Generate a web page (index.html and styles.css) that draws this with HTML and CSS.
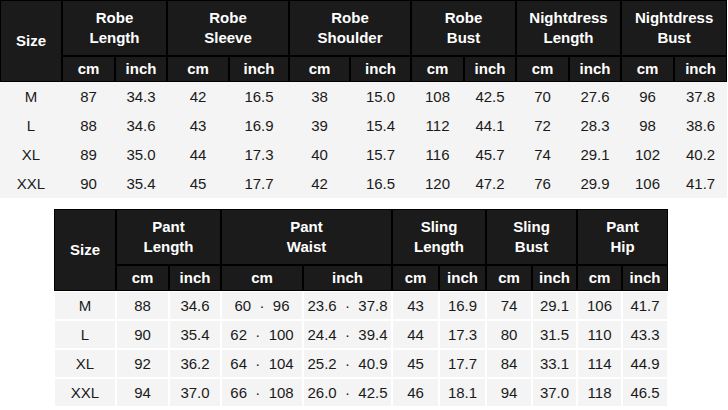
FILE: index.html
```html
<!DOCTYPE html>
<html>
<head>
<meta charset="utf-8">
<link rel="stylesheet" href="styles.css">
</head>
<body>
<div class="page">
<table class="chart chart-top">
  <colgroup>
    <col style="width:62px">
    <col style="width:53px"><col style="width:52px">
    <col style="width:62px"><col style="width:60px">
    <col style="width:61px"><col style="width:61px">
    <col style="width:53px"><col style="width:52px">
    <col style="width:53px"><col style="width:52px">
    <col style="width:53px"><col style="width:53px">
  </colgroup>
  <thead>
    <tr class="h1">
      <th rowspan="2">Size</th>
      <th colspan="2">Robe<br>Length</th>
      <th colspan="2">Robe<br>Sleeve</th>
      <th colspan="2">Robe<br>Shoulder</th>
      <th colspan="2">Robe<br>Bust</th>
      <th colspan="2">Nightdress<br>Length</th>
      <th colspan="2">Nightdress<br>Bust</th>
    </tr>
    <tr class="h2">
      <th>cm</th><th>inch</th><th>cm</th><th>inch</th><th>cm</th><th>inch</th>
      <th>cm</th><th>inch</th><th>cm</th><th>inch</th><th>cm</th><th>inch</th>
    </tr>
  </thead>
  <tbody>
    <tr><td>M</td><td>87</td><td>34.3</td><td>42</td><td>16.5</td><td>38</td><td>15.0</td><td>108</td><td>42.5</td><td>70</td><td>27.6</td><td>96</td><td>37.8</td></tr>
    <tr><td>L</td><td>88</td><td>34.6</td><td>43</td><td>16.9</td><td>39</td><td>15.4</td><td>112</td><td>44.1</td><td>72</td><td>28.3</td><td>98</td><td>38.6</td></tr>
    <tr><td>XL</td><td>89</td><td>35.0</td><td>44</td><td>17.3</td><td>40</td><td>15.7</td><td>116</td><td>45.7</td><td>74</td><td>29.1</td><td>102</td><td>40.2</td></tr>
    <tr><td>XXL</td><td>90</td><td>35.4</td><td>45</td><td>17.7</td><td>42</td><td>16.5</td><td>120</td><td>47.2</td><td>76</td><td>29.9</td><td>106</td><td>41.7</td></tr>
  </tbody>
</table>

<table class="chart chart-bottom">
  <colgroup>
    <col style="width:62px">
    <col style="width:53px"><col style="width:52px">
    <col style="width:82px"><col style="width:89px">
    <col style="width:47px"><col style="width:47px">
    <col style="width:46px"><col style="width:45px">
    <col style="width:45px"><col style="width:46px">
  </colgroup>
  <thead>
    <tr class="h1">
      <th rowspan="2">Size</th>
      <th colspan="2">Pant<br>Length</th>
      <th colspan="2">Pant<br>Waist</th>
      <th colspan="2">Sling<br>Length</th>
      <th colspan="2">Sling<br>Bust</th>
      <th colspan="2">Pant<br>Hip</th>
    </tr>
    <tr class="h2">
      <th>cm</th><th>inch</th><th>cm</th><th>inch</th><th>cm</th><th>inch</th>
      <th>cm</th><th>inch</th><th>cm</th><th>inch</th>
    </tr>
  </thead>
  <tbody>
    <tr><td>M</td><td>88</td><td>34.6</td><td>60&nbsp;&nbsp;·&nbsp;&nbsp;96</td><td>23.6&nbsp;&nbsp;·&nbsp;&nbsp;37.8</td><td>43</td><td>16.9</td><td>74</td><td>29.1</td><td>106</td><td>41.7</td></tr>
    <tr><td>L</td><td>90</td><td>35.4</td><td>62&nbsp;&nbsp;·&nbsp;&nbsp;100</td><td>24.4&nbsp;&nbsp;·&nbsp;&nbsp;39.4</td><td>44</td><td>17.3</td><td>80</td><td>31.5</td><td>110</td><td>43.3</td></tr>
    <tr><td>XL</td><td>92</td><td>36.2</td><td>64&nbsp;&nbsp;·&nbsp;&nbsp;104</td><td>25.2&nbsp;&nbsp;·&nbsp;&nbsp;40.9</td><td>45</td><td>17.7</td><td>84</td><td>33.1</td><td>114</td><td>44.9</td></tr>
    <tr><td>XXL</td><td>94</td><td>37.0</td><td>66&nbsp;&nbsp;·&nbsp;&nbsp;108</td><td>26.0&nbsp;&nbsp;·&nbsp;&nbsp;42.5</td><td>46</td><td>18.1</td><td>94</td><td>37.0</td><td>118</td><td>46.5</td></tr>
  </tbody>
</table>
</div>
</body>
</html>
```

FILE: styles.css
```css
html, body {
  margin: 0;
  padding: 0;
  background: #ffffff;
}

.page {
  display: flex;
  flex-direction: column;
  align-items: flex-start;
  font-family: "Liberation Sans", Arial, sans-serif;
}

.chart {
  table-layout: fixed;
  border-collapse: separate;
  border-spacing: 0;
  font-size: 15px;
  text-align: center;
}

.chart-top {
  width: 727px;
}

.chart-bottom {
  width: 614px;
  margin-top: 11px;
  margin-left: 54px;
}

.chart th {
  background: #1b1b1b;
  color: #ffffff;
  font-weight: bold;
  border: 1px solid #000000;
  padding: 0;
  line-height: 20px;
  vertical-align: middle;
}

.chart .h1 {
  height: 56px;
}

.chart .h2 {
  height: 26px;
}

.chart td {
  background: #f4f4f4;
  color: #1a1a1a;
  padding: 0;
  line-height: 18px;
  vertical-align: middle;
  white-space: nowrap;
}

.chart tbody tr {
  height: 29px;
}

.chart-top td {
  border: 1px solid #f4f4f4;
}

.chart-bottom td {
  border: 1px solid #ffffff;
}
```
